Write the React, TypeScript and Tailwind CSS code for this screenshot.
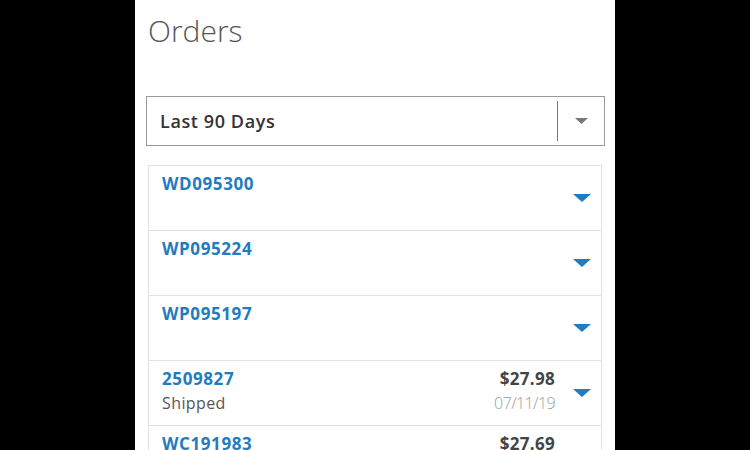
import React from 'react';

type Order = {
    id: string;
    status?: string;
    total?: string;
    date?: string;
};

const orders: Order[] = [
    { id: 'WD095300' },
    { id: 'WP095224' },
    { id: 'WP095197' },
    { id: '2509827', status: 'Shipped', total: '$27.98', date: '07/11/19' },
    { id: 'WC191983', status: 'Shipped', total: '$27.69', date: '07/02/19' },
];

const Caret = ({ className }: { className: string }) => (
    <svg viewBox="0 0 18 8" className={className}>
        <path d="M0 0 L18 0 L9 8 Z" fill="currentColor" />
    </svg>
);

const App = () => {
    return (
        <div className="w-[750px] h-[450px] bg-black overflow-hidden font-['Open_Sans',sans-serif]">
            <div className="w-[480px] h-full mx-auto bg-white pl-[11px] pr-[10px]">
                {/* Title */}
                <h1 className="pt-[10px] pl-[2px] text-[30px] leading-[42px] font-light text-[#555]">
                    Orders
                </h1>

                {/* Date range select */}
                <div className="mt-[44px] h-[50px] flex items-center border border-[#999] text-[#333]">
                    <span className="flex-1 pl-[13px] text-[18px] font-semibold tracking-[0.6px]">Last 90 Days</span>
                    <span className="w-px h-[40px] bg-[#777]"></span>
                    <span className="w-[46px] flex justify-center">
                        <Caret className="w-[13px] h-[6px] text-[#777]" />
                    </span>
                </div>

                {/* Order list */}
                <div className="mt-[19px] ml-[2px] mr-[3px] border border-[#e2e2e2]">
                    {orders.map((o) => (
                        <div key={o.id} className="h-[65px] border-b border-[#e2e2e2] flex items-start pl-[13px] pr-[10px]">
                            <div className="flex-1 pt-[5px]">
                                <div className="text-[17px] font-bold leading-[25px] tracking-[0.6px] text-[#1f7cc0]">{o.id}</div>
                                {o.status && <div className="text-[16px] leading-[25px] tracking-[0.4px] text-[#555]">{o.status}</div>}
                            </div>
                            {o.total && (
                                <div className="pt-[5px] text-right">
                                    <div className="text-[17px] font-bold leading-[25px] tracking-[0.3px] text-[#444]">{o.total}</div>
                                    <div className="text-[16px] font-light leading-[25px] tracking-[-0.6px] text-[#999]">{o.date}</div>
                                </div>
                            )}
                            <div className="self-center ml-[18px]">
                                <Caret className="w-[18px] h-[8px] text-[#1f7cc0]" />
                            </div>
                        </div>
                    ))}
                </div>
            </div>
        </div>
    );
};

export default App;
